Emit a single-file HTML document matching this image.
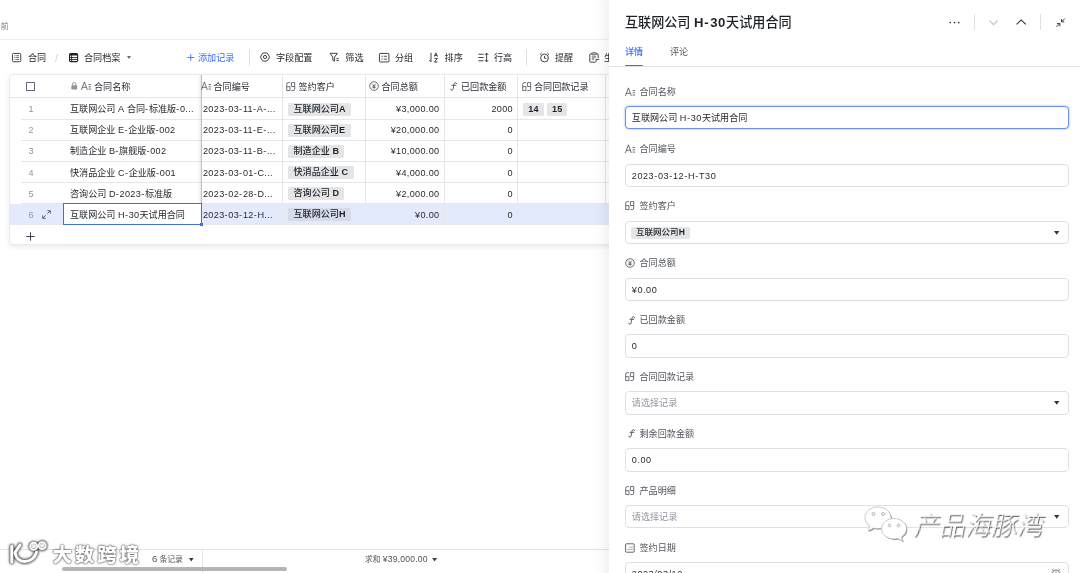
<!DOCTYPE html>
<html lang="zh-CN">
<head>
<meta charset="utf-8">
<title>合同档案</title>
<style>
*{box-sizing:border-box;margin:0;padding:0}
html,body{width:1080px;height:573px;overflow:hidden;background:#fff}
body{position:relative;font-family:"Liberation Sans","Noto Sans CJK SC",sans-serif;font-size:9px;color:#1f2329}
.abs{position:absolute;white-space:nowrap}
svg{display:block;overflow:visible}
#root{position:absolute;left:0;top:0;width:1080px;height:573px;will-change:transform}
#crumb{left:.8px;top:21.6px;font-size:7.8px;color:#7d8187;line-height:10px}
#topline{left:0;top:39.2px;width:612px;height:1.3px;background:#eeeff0}
.tb{top:51.6px;height:13px;line-height:13px;font-size:9.1px;color:#1f2329}
.vsep{width:1px;background:#dee0e3}
#card{left:9.2px;top:74px;width:642px;height:171.2px;border:1px solid #e9eaec;border-radius:4px;background:#fff;box-shadow:0 2px 5px rgba(31,35,41,.09);overflow:hidden}
.hl{position:absolute;height:1px;background:#e6e7e9}
.vl{position:absolute;width:1px;background:#e6e7e9}
.ct{height:14px;line-height:14px;font-size:9.1px;color:#1f2329}
.hd{color:#2b2f36}
.idx{color:#8f959e}
.tag{display:inline-block;height:13px;line-height:13px;padding:0 5.5px;background:#e4e5e7;border-radius:1.5px;font-size:9.1px;font-weight:500;color:#1f2329}
.itag{position:relative}
.ptag{font-size:8.5px;height:11.7px;line-height:11.7px;padding:0 5px;top:-0.3px;left:-0.7px}
.inp .l{letter-spacing:.55px}
.bt{font-size:7.800px;line-height:12px;color:#4e535a}
#botline{left:0;top:548.900px;width:612px;height:1px;background:#e1e2e4}
#scroll{left:62px;top:566.600px;width:225px;height:4.6px;border-radius:2.3px;background:#b3b5b7}
#wm1{left:5px;top:536px}
#wm1t{position:absolute;left:47.500px;top:3.900px;font-size:19.600px;line-height:30px;font-weight:900;color:#fff;letter-spacing:2.750px;text-shadow:0 0 1.500px rgba(0,0,0,.65),0 0 2.500px rgba(0,0,0,.5),0 0 1px rgba(0,0,0,.45)}
#panel{left:608px;top:0;width:472px;height:573px}
#pbg{left:1px;top:-10px;width:480px;height:600px;background:#fff;box-shadow:-2px 0 16px rgba(0,0,0,.085)}
#ptitle{left:17px;top:13.7px;font-size:13.1px;line-height:18px;font-weight:500;color:#1f2329}
.tab{top:44.8px;font-size:9.1px;line-height:14px}
#tabline{left:1px;top:66px;width:472px;height:1px;background:#e1e2e4}
#tabul{left:17px;top:64.600px;width:18.2px;height:2.3px;background:#3a6fe8;border-radius:1.2px}
.lab{left:17px;height:12px;line-height:12px;font-size:9.1px;color:#51565d}
.lab svg{position:absolute;left:0;top:1px}
.lab span{position:absolute;left:14.5px;top:0}
.inp{left:17px;width:444px;height:23.4px;border:1px solid #dee0e3;border-radius:4px;background:#fff;line-height:22.2px;font-size:9.1px;padding-left:5.8px;color:#1f2329}
.inp.focus{border-color:#6a8fee;box-shadow:0 0 0 1.3px rgba(78,131,253,.20)}
.ph{color:#8f959e}
.caret{position:absolute;right:8.2px;top:8.8px}
#wm2{left:255px;top:503px}
#wm2 svg{position:relative;top:1.500px}
#wm2t{position:absolute;left:48.500px;top:3.600px;font-size:25.500px;line-height:36px;font-weight:300;color:#fff;letter-spacing:.35px;transform:skewX(-11deg);transform-origin:0 100%;text-shadow:1px 1px .7px rgba(0,0,0,.72)}
.l{letter-spacing:.33px}
.l i{font-style:normal;letter-spacing:.75px}
</style>
</head>
<body>
<div id="root">
<div id="crumb" class="abs">前</div>
<div id="topline" class="abs"></div>
<div class="abs" style="left:11.8px;top:52.8px"><svg width="9.2" height="9.2" viewBox="0 0 9.2 9.2" fill="none" stroke="#2b2f36" stroke-width=".9"><rect x="0.45" y="0.45" width="8.3" height="8.3" rx="1.1"/><path d="M2.4 2.7h1.1M4.2 2.7h2.8M2.4 4.6h1.1M4.2 4.6h2.8M2.4 6.5h1.1M4.2 6.5h2.8" stroke-width=".8" stroke="#3a3f46"/></svg></div>
<div class="abs tb" style="left:28px;">合同</div>
<div class="abs tb" style="left:55px;color:#d3d5d8;font-size:11px">/</div>
<div class="abs" style="left:68.7px;top:52.8px"><svg width="9.2" height="9.2" viewBox="0 0 9.2 9.2" fill="none" stroke="#1f2329" stroke-width="1.1"><rect x="0.55" y="0.55" width="8.1" height="8.1" rx="1.1"/><path d="M0.6 1.7h8" stroke-width="1.6"/><path d="M0.6 4.6h8M0.6 6.6h8M2.6 1v7.6" stroke-width=".9"/></svg></div>
<div class="abs tb" style="left:84px;">合同档案</div>
<div class="abs" style="left:126.8px;top:56px;width:0;height:0;border-left:2.7px solid transparent;border-right:2.7px solid transparent;border-top:3.2px solid #646a73"></div>
<div class="abs" style="left:187px;top:51.5px"><svg width="8" height="11" viewBox="0 0 8 11" stroke="#3370ff" stroke-width=".9"><path d="M0.4 5.5h6.8M3.8 2.1v6.8"/></svg></div>
<div class="abs tb" style="left:198px;color:#3370ff;">添加记录</div>
<div class="abs vsep" style="left:249px;top:49px;height:17px"></div>
<div class="abs" style="left:260.4px;top:52.3px"><svg width="10" height="10" viewBox="0 0 10 10" fill="none" stroke="#2b2f36" stroke-width=".9" stroke-linejoin="round"><path d="M8.55 2.95 7.23 1.15 5.00 0.90 2.78 1.15 1.45 2.95 0.55 5.00 1.45 7.05 2.77 8.85 5.00 9.10 7.23 8.85 8.55 7.05 9.45 5.00Z"/><circle cx="5" cy="5" r="1.600"/></svg></div>
<div class="abs tb" style="left:276px;">字段配置</div>
<div class="abs" style="left:329px;top:52px"><svg width="11" height="11" viewBox="0 0 11 11" fill="none" stroke="#2b2f36" stroke-width=".9"><path d="M1 1.3h7.4L5.6 5v4.2L3.8 8.2V5Z" stroke-linejoin="round"/><path d="M7.4 6.6h2.4M7.4 8.6h2.4"/></svg></div>
<div class="abs tb" style="left:345.3px;">筛选</div>
<div class="abs" style="left:379.2px;top:52.9px"><svg width="10.400" height="9.400" viewBox="0 0 10.4 9.4" fill="none" stroke="#2b2f36" stroke-width=".9"><rect x="0.450" y="0.450" width="9.500" height="8.500" rx=".7"/><path d="M2.400 3.300h1.300M4.800 3.300h3.200M2.400 6.100h1.300M4.800 6.100h3.200" stroke-width=".85"/></svg></div>
<div class="abs tb" style="left:395px;">分组</div>
<div class="abs" style="left:429px;top:52px"><svg width="10" height="11" viewBox="0 0 10 11" fill="none" stroke="#2b2f36" stroke-width=".9"><path d="M2 0.8v9M0.4 8l1.6 1.9"/><path d="M5.3 4.6 L6.9 0.9 L8.5 4.6 M5.8 3.4h2.2" stroke-width=".9"/><path d="M5.4 6.4h3l-3 3.6h3.1" stroke-width=".9"/></svg></div>
<div class="abs tb" style="left:444.6px;">排序</div>
<div class="abs" style="left:477.5px;top:52px"><svg width="11" height="11" viewBox="0 0 11 11" fill="none" stroke="#2b2f36" stroke-width=".9"><path d="M0.4 2.2h5.2M0.4 5.5h5.2M0.4 8.8h5.2"/><path d="M8.6 1.2v8.6M7 2.9l1.6-1.8 1.6 1.8M7 8.1l1.6 1.8 1.6-1.8"/></svg></div>
<div class="abs tb" style="left:494px;">行高</div>
<div class="abs vsep" style="left:526px;top:49px;height:17px"></div>
<div class="abs" style="left:538.5px;top:52px"><svg width="11" height="11" viewBox="0 0 11 11" fill="none" stroke="#2b2f36" stroke-width=".9"><circle cx="5.5" cy="6" r="3.9"/><path d="M5.5 3.9V6.2H7.3M1 2.6 2.6 1.1M10 2.6 8.4 1.1"/></svg></div>
<div class="abs tb" style="left:555px;">提醒</div>
<div class="abs" style="left:588.5px;top:52px"><svg width="11" height="11" viewBox="0 0 11 11" fill="none" stroke="#2b2f36" stroke-width=".9"><path d="M3 1.8H1.6a.8.8 0 0 0-.8.8v6.8a.8.8 0 0 0 .8.8h4.6M7 1.8h1.4a.8.8 0 0 1 .8.8V6"/><rect x="3" y="0.8" width="4" height="2" rx=".5"/><path d="M2.8 5h4.4M2.8 7h2.4"/><path d="M7 10.2V7.4h3.2"/></svg></div>
<div class="abs tb" style="left:604px;">生成</div>
<div id="card" class="abs">
<div class="abs" style="left:0;top:128.75px;width:640px;height:21.15px;background:#e3eafb"></div>
<div class="hl" style="left:0;top:22.30px;width:640px"></div>
<div class="hl" style="left:11.3px;top:43.65px;width:640px"></div>
<div class="hl" style="left:11.3px;top:64.80px;width:640px"></div>
<div class="hl" style="left:11.3px;top:85.95px;width:640px"></div>
<div class="hl" style="left:11.3px;top:107.10px;width:640px"></div>
<div class="hl" style="left:11.3px;top:128.25px;width:640px"></div>
<div class="hl" style="left:11.3px;top:149.40px;width:640px"></div>
<div class="vl" style="left:272.30px;top:0;height:149.90px"></div>
<div class="vl" style="left:354.80px;top:0;height:149.90px"></div>
<div class="vl" style="left:433.80px;top:0;height:149.90px"></div>
<div class="vl" style="left:506.80px;top:0;height:149.90px"></div>
<div class="vl" style="left:595.30px;top:0;height:149.90px"></div>
<div class="abs" style="left:188.30px;top:0;width:3px;height:149.90px;background:linear-gradient(to right,rgba(31,35,41,0),rgba(31,35,41,.10))"></div>
<div class="abs" style="left:190.80px;top:0;width:1px;height:149.90px;background:#bfc2c6"></div>
<div class="abs" style="left:15.80px;top:7.00px;width:9px;height:9px;border:.9px solid #646a73;border-radius:.5px"></div>
<div class="abs" style="left:60.40px;top:7.10px"><svg width="6.500" height="7.800" viewBox="0 0 6 7"><rect x="0.3" y="2.8" width="5.4" height="4" rx=".7" fill="#8f959e"/><path d="M1.4 3V2a1.6 1.6 0 0 1 3.2 0v1" fill="none" stroke="#8f959e" stroke-width=".9"/></svg></div>
<div class="abs" style="left:71.10px;top:6.30px"><svg width="10.300" height="9.600" viewBox="0 0 10 9" fill="none" stroke="#51565d" stroke-width=".82"><path d="M0.4 8.500 3.300 0.700 6.200 8.500M1.400 6h3.800"/><path d="M7.300 3.300h2.500M7.300 5.500h2.500M7.300 7.700h2.500" stroke-width=".8"/></svg></div>
<div class="abs ct hd" style="left:83.80px;top:4.80px;">合同名称</div>
<div class="abs" style="left:191.00px;top:6.30px"><svg width="10.300" height="9.600" viewBox="0 0 10 9" fill="none" stroke="#51565d" stroke-width=".82"><path d="M0.4 8.500 3.300 0.700 6.200 8.500M1.400 6h3.800"/><path d="M7.300 3.300h2.500M7.300 5.500h2.500M7.300 7.700h2.500" stroke-width=".8"/></svg></div>
<div class="abs ct hd" style="left:203.30px;top:4.80px;">合同编号</div>
<div class="abs" style="left:275.90px;top:6.90px"><svg width="9.400" height="9.200" viewBox="0 0 9.4 9.2" fill="none" stroke="#51565d" stroke-width=".85" stroke-linejoin="round"><path d="M4 0.600H2.300Q0.700 0.600 0.700 2.200V8.600H4V4.700H0.700"/><path d="M5.400 8.600H7.100Q8.700 8.600 8.700 7V0.600H5.400V4.500H8.700"/></svg></div>
<div class="abs ct hd" style="left:288.30px;top:4.80px;">签约客户</div>
<div class="abs" style="left:359.10px;top:6.30px"><svg width="10" height="10" viewBox="0 0 10 10" fill="none" stroke="#51565d" stroke-width=".85"><circle cx="5" cy="5" r="4.3"/><path d="M3.3 2.6 5 5l1.7-2.4M5 5v2.8M3.4 5.2h3.2M3.4 6.5h3.2" stroke-width=".75"/></svg></div>
<div class="abs ct hd" style="left:371.30px;top:4.80px;">合同总额</div>
<div class="abs" style="left:439.80px;top:7.20px"><svg width="7.200" height="8.800" viewBox="0 0 7.2 8.8" fill="none" stroke="#51565d" stroke-width=".95" stroke-linecap="round"><path d="M6.600 1.500C6.200 0.200 4.300 0.200 4 2.100L3.200 6.800C2.900 8.600 1 8.600 0.600 7.300M1.900 3.300h4"/></svg></div>
<div class="abs ct hd" style="left:450.80px;top:4.80px;">已回款金额</div>
<div class="abs" style="left:511.90px;top:6.90px"><svg width="9.400" height="9.200" viewBox="0 0 9.4 9.2" fill="none" stroke="#51565d" stroke-width=".85" stroke-linejoin="round"><path d="M4 0.600H2.300Q0.700 0.600 0.700 2.200V8.600H4V4.700H0.700"/><path d="M5.400 8.600H7.100Q8.700 8.600 8.700 7V0.600H5.400V4.500H8.700"/></svg></div>
<div class="abs ct hd" style="left:523.80px;top:4.80px;">合同回款记录</div>
<div class="abs ct idx" style="left:18.30px;top:27.08px;"><span class="l">1</span></div>
<div class="abs ct " style="left:59.80px;top:27.08px;">互联网公司 <span class="l">A</span> 合同<span class="l"><i>-</i></span>标准版<span class="l"><i>-</i>0...</span></div>
<div class="abs ct " style="left:192.80px;top:27.08px;"><span class="l">2023<i>-</i>03<i>-</i>11<i>-</i>A<i>-</i>...</span></div>
<div class="abs tag" style="left:277.80px;top:27.58px;background:#e4e5e7">互联网公司<b>A</b></div>
<div class="abs ct " style="right:210.70px;top:27.08px;"><span class="l">¥3,000.00</span></div>
<div class="abs ct " style="right:137.20px;top:27.08px;"><span class="l">2000</span></div>
<div class="abs ct idx" style="left:18.30px;top:48.22px;"><span class="l">2</span></div>
<div class="abs ct " style="left:59.80px;top:48.22px;">互联网企业 <span class="l">E<i>-</i></span>企业版<span class="l"><i>-</i>002</span></div>
<div class="abs ct " style="left:192.80px;top:48.22px;"><span class="l">2023<i>-</i>03<i>-</i>11<i>-</i>E<i>-</i>...</span></div>
<div class="abs tag" style="left:277.80px;top:48.72px;background:#e4e5e7">互联网公司<b>E</b></div>
<div class="abs ct " style="right:210.70px;top:48.22px;"><span class="l">¥20,000.00</span></div>
<div class="abs ct " style="right:137.20px;top:48.22px;"><span class="l">0</span></div>
<div class="abs ct idx" style="left:18.30px;top:69.38px;"><span class="l">3</span></div>
<div class="abs ct " style="left:59.80px;top:69.38px;">制造企业 <span class="l">B<i>-</i></span>旗舰版<span class="l"><i>-</i>002</span></div>
<div class="abs ct " style="left:192.80px;top:69.38px;"><span class="l">2023<i>-</i>03<i>-</i>11<i>-</i>B<i>-</i>...</span></div>
<div class="abs tag" style="left:277.80px;top:69.88px;background:#e4e5e7">制造企业 <b>B</b></div>
<div class="abs ct " style="right:210.70px;top:69.38px;"><span class="l">¥10,000.00</span></div>
<div class="abs ct " style="right:137.20px;top:69.38px;"><span class="l">0</span></div>
<div class="abs ct idx" style="left:18.30px;top:90.52px;"><span class="l">4</span></div>
<div class="abs ct " style="left:59.80px;top:90.52px;">快消品企业 <span class="l">C<i>-</i></span>企业版<span class="l"><i>-</i>001</span></div>
<div class="abs ct " style="left:192.80px;top:90.52px;"><span class="l">2023<i>-</i>03<i>-</i>01<i>-</i>C...</span></div>
<div class="abs tag" style="left:277.80px;top:91.02px;background:#e4e5e7">快消品企业 <b>C</b></div>
<div class="abs ct " style="right:210.70px;top:90.52px;"><span class="l">¥4,000.00</span></div>
<div class="abs ct " style="right:137.20px;top:90.52px;"><span class="l">0</span></div>
<div class="abs ct idx" style="left:18.30px;top:111.67px;"><span class="l">5</span></div>
<div class="abs ct " style="left:59.80px;top:111.67px;">咨询公司 <span class="l">D<i>-</i>2023<i>-</i></span>标准版</div>
<div class="abs ct " style="left:192.80px;top:111.67px;"><span class="l">2023<i>-</i>02<i>-</i>28<i>-</i>D...</span></div>
<div class="abs tag" style="left:277.80px;top:112.17px;background:#e4e5e7">咨询公司 <b>D</b></div>
<div class="abs ct " style="right:210.70px;top:111.67px;"><span class="l">¥2,000.00</span></div>
<div class="abs ct " style="right:137.20px;top:111.67px;"><span class="l">0</span></div>
<div class="abs ct idx" style="left:18.30px;top:132.82px;"><span class="l">6</span></div>
<div class="abs ct " style="left:192.80px;top:132.82px;"><span class="l">2023<i>-</i>03<i>-</i>12<i>-</i>H...</span></div>
<div class="abs tag" style="left:277.80px;top:133.32px;background:#d5dbe8">互联网公司<b>H</b></div>
<div class="abs ct " style="right:210.70px;top:132.82px;"><span class="l">¥0.00</span></div>
<div class="abs ct " style="right:137.20px;top:132.82px;"><span class="l">0</span></div>
<div class="abs tag" style="left:513.30px;top:27.58px;font-weight:bold;padding:0 4.700px"><span class="l">14</span></div>
<div class="abs tag" style="left:537.00px;top:27.58px;font-weight:bold;padding:0 4.700px"><span class="l">15</span></div>
<div class="abs" style="left:32.30px;top:134.82px"><svg width="9" height="9" viewBox="0 0 9 9" fill="none" stroke="#51565d" stroke-width=".9"><path d="M5.4 0.7h2.9v2.9M8.1 0.9 5.3 3.7M3.6 8.3H0.7V5.4M0.9 8.1 3.7 5.3"/></svg></div>
<div class="abs" style="left:52.80px;top:128.25px;width:139.00px;height:22.15px;border:1.5px solid #3d6fe0;background:#fff"></div>
<div class="abs ct " style="left:59.80px;top:132.82px;">互联网公司 <span class="l">H<i>-</i>30</span>天试用合同</div>
<div class="abs" style="left:189.80px;top:148.40px;width:3px;height:3px;background:#3d6fe0"></div>
<div class="abs" style="left:16.30px;top:156.57px"><svg width="9" height="9" viewBox="0 0 9 9" stroke="#2b2f36" stroke-width=".9"><path d="M0.3 4.5h8.4M4.5 0.3v8.4"/></svg></div>
</div>
<div id="botline" class="abs"></div>
<div class="abs" style="left:201.600px;top:549.500px;width:1px;height:24px;background:#e6e7e9"></div>
<div class="abs bt" style="left:152px;top:553.400px"><span style="font-size:9.600px">6</span> 条记录</div>
<div class="abs" style="left:188.6px;top:557.8px"><svg width="4.600" height="3.400" viewBox="0 0 4.6 3.4"><path d="M0 0h4.600L2.300 3.400Z" fill="#33373d"/></svg></div>
<div class="abs bt" style="left:365px;top:553.400px">求和 <span class="l" style="letter-spacing:.2px;font-size:8.600px">¥39,000.00</span></div>
<div class="abs" style="left:431.900px;top:557.900px"><svg width="5.200" height="3.500" viewBox="0 0 5.2 3.5"><path d="M0 0h5.200L2.600 3.500Z" fill="#3f444b"/></svg></div>
<div id="scroll" class="abs"></div>
<div id="wm1" class="abs"><svg width="46" height="34" viewBox="0 0 46 34"><defs><filter id="bl" x="-20%" y="-20%" width="140%" height="140%"><feGaussianBlur stdDeviation="1"/></filter></defs><g filter="url(#bl)" fill="none" stroke="#3a3a3a" stroke-opacity=".95" stroke-width="4.800" stroke-linecap="round" stroke-linejoin="round"><path d="M6.800 10.300v15.600"/><path d="M15 9 10 16.500c1 5.500 4.500 9 9.500 9 6 0 10.500-3.800 12-9.300"/><circle cx="28.700" cy="10.300" r="3.500" stroke-width="3.700"/><circle cx="37.200" cy="9.600" r="3.500" stroke-width="3.700"/></g><g fill="#fff" fill-opacity=".8"><circle cx="28.700" cy="10.300" r="2.500"/><circle cx="37.200" cy="9.600" r="2.500"/></g><g fill="none" stroke="#fff" stroke-width="3" stroke-linecap="round" stroke-linejoin="round"><path d="M6.800 10.300v15.600"/><path d="M15 9 10 16.500c1 5.500 4.500 9 9.500 9 6 0 10.500-3.800 12-9.300"/><circle cx="28.700" cy="10.300" r="3.500" stroke-width="1.900"/><circle cx="37.200" cy="9.600" r="3.500" stroke-width="1.900"/></g></svg><div id="wm1t">大数跨境</div></div>
<div id="panel" class="abs"><div id="pbg" class="abs"></div>
<div id="ptitle" class="abs">互联网公司 <span style="letter-spacing:.7px;font-weight:bold">H<i style="font-style:normal;letter-spacing:1.500px">-</i>30</span>天试用合同</div>
<div class="abs" style="left:341.300px;top:20.600px"><svg width="12" height="3" viewBox="0 0 12 3" fill="#2b2f36"><circle cx="1.200" cy="1.500" r=".85"/><circle cx="5.500" cy="1.500" r=".85"/><circle cx="9.800" cy="1.500" r=".85"/></svg></div>
<div class="abs vsep" style="left:366px;top:14px;height:16px"></div>
<div class="abs" style="left:381px;top:20px"><svg width="9.200" height="5.400" viewBox="0 0 9.2 5.4" fill="none" stroke="#bfc2c6" stroke-width="1.200"><path d="M0.500 0.600 4.600 4.600l4.100-4"/></svg></div>
<div class="abs" style="left:408px;top:19px"><svg width="10.400" height="6" viewBox="0 0 10.4 6" fill="none" stroke="#2b2f36" stroke-width="1.100"><path d="M0.600 5.400 5.200 0.900l4.600 4.500"/></svg></div>
<div class="abs vsep" style="left:432px;top:14px;height:16px"></div>
<div class="abs" style="left:447.500px;top:17.600px"><svg width="9.400" height="9.400" viewBox="0 0 10 10" fill="none" stroke="#2b2f36" stroke-width="1"><path d="M9.500 0.500 5.900 4.100M5.900 1.200V4.100h2.900M0.500 9.500 4.100 5.900M4.100 8.800V5.900H1.200"/></svg></div>
<div class="abs tab" style="left:17px;color:#3370ff;font-weight:500">详情</div>
<div class="abs tab" style="left:62px;color:#51565d">评论</div>
<div id="tabul" class="abs"></div>
<div id="tabline" class="abs"></div>
<div class="abs lab" style="top:86.30px"><svg width="10.300" height="9.600" viewBox="0 0 10 9" fill="none" stroke="#51565d" stroke-width=".82"><path d="M0.4 8.500 3.300 0.700 6.200 8.500M1.400 6h3.800"/><path d="M7.300 3.300h2.500M7.300 5.500h2.500M7.300 7.700h2.500" stroke-width=".8"/></svg><span>合同名称</span></div>
<div class="abs inp focus" style="top:106.00px">互联网公司 <span class="l">H<i>-</i>30</span>天试用合同</div>
<div class="abs lab" style="top:143.23px"><svg width="10.300" height="9.600" viewBox="0 0 10 9" fill="none" stroke="#51565d" stroke-width=".82"><path d="M0.4 8.500 3.300 0.700 6.200 8.500M1.400 6h3.800"/><path d="M7.300 3.300h2.500M7.300 5.500h2.500M7.300 7.700h2.500" stroke-width=".8"/></svg><span>合同编号</span></div>
<div class="abs inp" style="top:163.90px"><span class="l">2023<i>-</i>03<i>-</i>12<i>-</i>H<i>-</i>T30</span></div>
<div class="abs lab" style="top:200.16px"><svg width="9.400" height="9.200" viewBox="0 0 9.4 9.2" fill="none" stroke="#51565d" stroke-width=".85" stroke-linejoin="round"><path d="M4 0.600H2.300Q0.700 0.600 0.700 2.200V8.600H4V4.700H0.700"/><path d="M5.400 8.600H7.100Q8.700 8.600 8.700 7V0.600H5.400V4.500H8.700"/></svg><span>签约客户</span></div>
<div class="abs inp" style="top:220.75px"><span class="tag itag ptag">互联网公司<b>H</b></span><svg class="caret" width="5.4" height="3.7" viewBox="0 0 5.4 3.7"><path d="M0 0h5.4L2.7 3.7Z" fill="#33373d"/></svg></div>
<div class="abs lab" style="top:257.09px"><svg width="10" height="10" viewBox="0 0 10 10" fill="none" stroke="#51565d" stroke-width=".85"><circle cx="5" cy="5" r="4.3"/><path d="M3.3 2.6 5 5l1.7-2.4M5 5v2.8M3.4 5.2h3.2M3.4 6.5h3.2" stroke-width=".75"/></svg><span>合同总额</span></div>
<div class="abs inp" style="top:277.60px"><span class="l">¥0.00</span></div>
<div class="abs lab" style="top:314.02px"><svg style="left:2.800px;top:1.600px" width="7.200" height="8.800" viewBox="0 0 7.2 8.8" fill="none" stroke="#51565d" stroke-width=".95" stroke-linecap="round"><path d="M6.600 1.500C6.200 0.200 4.300 0.200 4 2.100L3.200 6.800C2.900 8.600 1 8.600 0.600 7.300M1.900 3.300h4"/></svg><span>已回款金额</span></div>
<div class="abs inp" style="top:334.45px"><span class="l">0</span></div>
<div class="abs lab" style="top:370.95px"><svg width="9.400" height="9.200" viewBox="0 0 9.4 9.2" fill="none" stroke="#51565d" stroke-width=".85" stroke-linejoin="round"><path d="M4 0.600H2.300Q0.700 0.600 0.700 2.200V8.600H4V4.700H0.700"/><path d="M5.400 8.600H7.100Q8.700 8.600 8.700 7V0.600H5.400V4.500H8.700"/></svg><span>合同回款记录</span></div>
<div class="abs inp" style="top:391.30px"><span class="ph">请选择记录</span><svg class="caret" width="5.4" height="3.7" viewBox="0 0 5.4 3.7"><path d="M0 0h5.4L2.7 3.7Z" fill="#33373d"/></svg></div>
<div class="abs lab" style="top:427.88px"><svg style="left:2.800px;top:1.600px" width="7.200" height="8.800" viewBox="0 0 7.2 8.8" fill="none" stroke="#51565d" stroke-width=".95" stroke-linecap="round"><path d="M6.600 1.500C6.200 0.200 4.300 0.200 4 2.100L3.200 6.800C2.900 8.600 1 8.600 0.600 7.300M1.900 3.300h4"/></svg><span>剩余回款金额</span></div>
<div class="abs inp" style="top:448.15px"><span class="l">0.00</span></div>
<div class="abs lab" style="top:484.81px"><svg width="9.400" height="9.200" viewBox="0 0 9.4 9.2" fill="none" stroke="#51565d" stroke-width=".85" stroke-linejoin="round"><path d="M4 0.600H2.300Q0.700 0.600 0.700 2.200V8.600H4V4.700H0.700"/><path d="M5.400 8.600H7.100Q8.700 8.600 8.700 7V0.600H5.400V4.500H8.700"/></svg><span>产品明细</span></div>
<div class="abs inp" style="top:505.00px"><span class="ph">请选择记录</span><svg class="caret" width="5.4" height="3.7" viewBox="0 0 5.4 3.7"><path d="M0 0h5.4L2.7 3.7Z" fill="#33373d"/></svg></div>
<div class="abs lab" style="top:541.74px"><svg width="10" height="10" viewBox="0 0 10 10" fill="none" stroke="#51565d" stroke-width=".9"><rect x="0.600" y="0.800" width="8.600" height="8.400" rx=".8"/><path d="M4.600 4.200h.9M6.500 4.200h.9M2.700 6.400h.9M4.600 6.400h.9M6.500 6.400h.9" stroke-width="1"/></svg><span>签约日期</span></div>
<div class="abs inp" style="top:561.85px"><span class="l">2023/03/12</span><div style="position:absolute;right:6.800px;top:5.300px"><svg width="10" height="10" viewBox="0 0 11 11" fill="none" stroke="#51565d" stroke-width=".9"><circle cx="5.5" cy="6" r="3.9"/><path d="M5.5 3.9V6.2H7.3M1 2.6 2.6 1.1M10 2.6 8.4 1.1"/></svg></div></div>
<div id="wm2" class="abs"><svg width="46" height="40" viewBox="0 0 46 40"><g transform="translate(.9,.9)" fill="#555" fill-opacity=".7"><path d="M15 2C7.500 2 2 6.800 2 12.800c0 3.400 1.800 6.300 4.600 8.300L5.200 26l5.600-3c1.300.400 2.700.600 4.200.600C22.500 23.600 28 18.800 28 12.800S22.500 2 15 2Z"/></g><g fill="#fff" stroke="#b4b4b4" stroke-width=".7"><path d="M15 2C7.500 2 2 6.800 2 12.800c0 3.400 1.800 6.300 4.600 8.300L5.200 26l5.600-3c1.300.400 2.700.600 4.200.600C22.500 23.600 28 18.800 28 12.800S22.500 2 15 2Z"/></g><g transform="translate(.9,.9)" fill="#555" fill-opacity=".7"><path d="M31 13.500c-7 0-12.500 4.500-12.500 10.200S24 34 31 34c1.300 0 2.600-.200 3.800-.500l5 2.800-1.300-4.400c3-1.900 5-4.800 5-8.200 0-5.700-5.500-10.200-12.500-10.200Z"/></g><g fill="#fff" stroke="#b4b4b4" stroke-width=".7"><path d="M31 13.500c-7 0-12.500 4.500-12.500 10.200S24 34 31 34c1.300 0 2.600-.200 3.800-.500l5 2.800-1.300-4.400c3-1.900 5-4.800 5-8.200 0-5.700-5.500-10.200-12.500-10.200Z"/></g><g fill="#fff" stroke="#9a9a9a" stroke-width=".7"><circle cx="10.500" cy="9" r="1.500"/><circle cx="20" cy="9" r="1.500"/><circle cx="26.500" cy="20.500" r="1.300"/><circle cx="35.500" cy="20.500" r="1.300"/></g></svg><div id="wm2t">产品海豚湾</div></div>
</div>
</div>
</body>
</html>
